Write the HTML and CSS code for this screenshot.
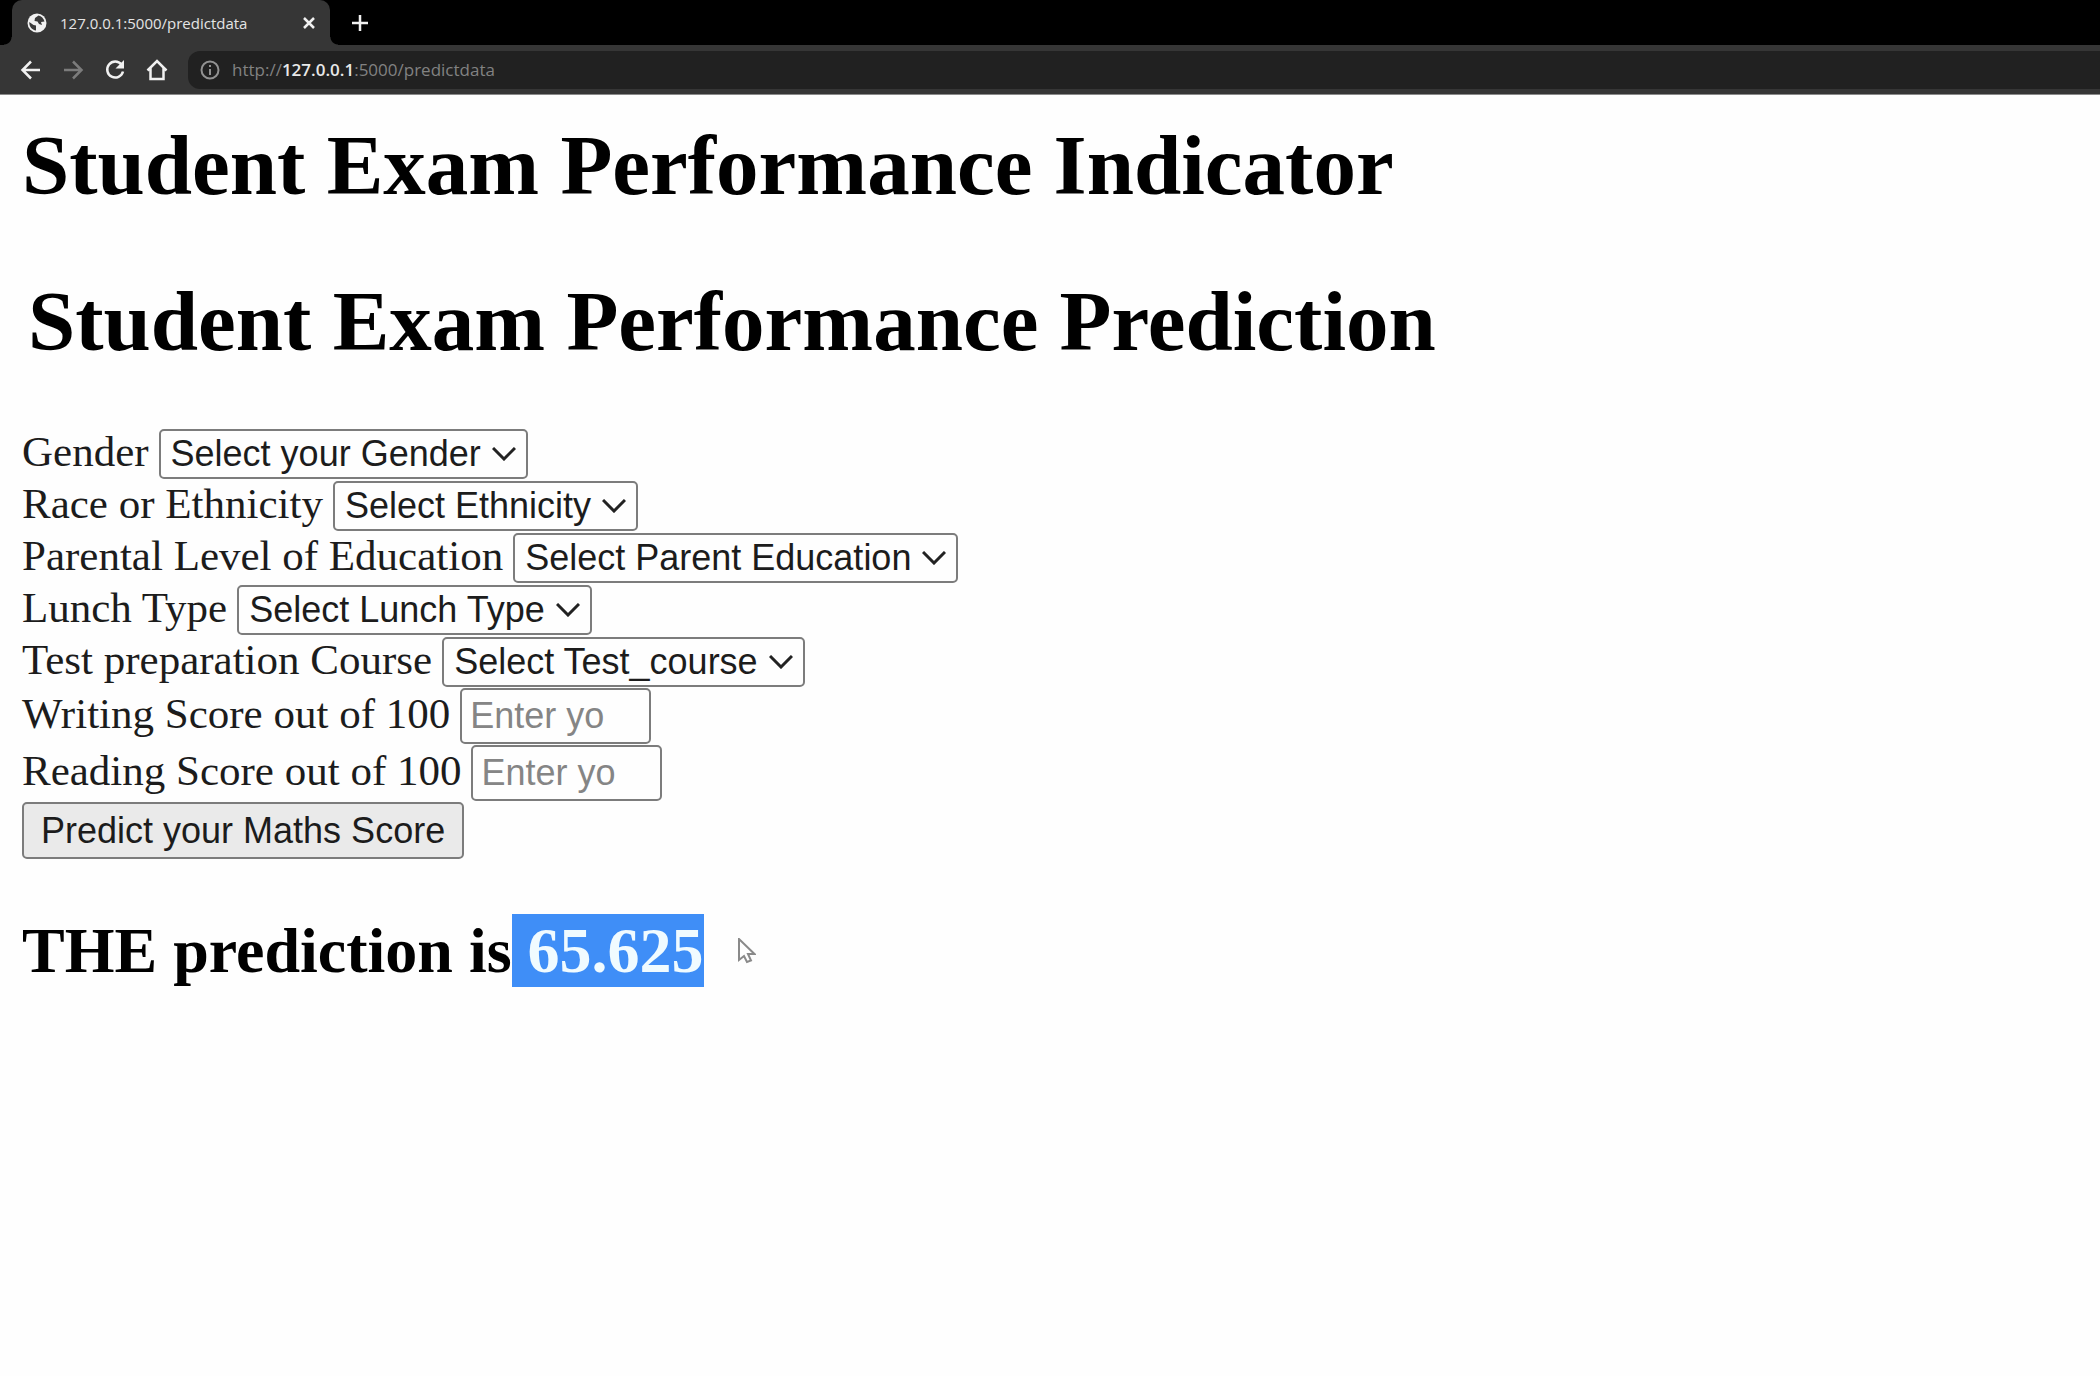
FILE: index.html
```html
<!DOCTYPE html>
<html lang="en">
<head>
<meta charset="utf-8">
<title>127.0.0.1:5000/predictdata</title>
<link rel="stylesheet" href="styles.css">
</head>
<body>
<header class="browser">
  <div class="tabstrip">
    <div class="tab">
      <svg class="globe" viewBox="0 0 20 20" aria-hidden="true"><circle cx="10" cy="10" r="9.5" fill="#f1f1f1"/><path d="M2.300 9 6.500 12l2.500.5v5C5 17 2 13.500 2.300 9zM8 5l3.500-2.500c3 .5 5 2.500 6 6L14 9l1 3-3-1-1.500-2.500L7.500 8z" fill="#3a3a3a"/></svg>
      <span class="tab-title">127.0.0.1:5000/predictdata</span>
      <button class="plain" type="button" aria-label="Close tab"><svg class="close" viewBox="0 0 12 12"><path d="M1 1l10 10M11 1L1 11"/></svg></button>
    </div>
    <button class="plain" type="button" aria-label="New tab"><svg class="plus" viewBox="0 0 16 16"><path d="M8 0v16M0 8h16"/></svg></button>
  </div>
  <nav class="toolbar">
    <button class="plain" type="button" aria-label="Back"><svg class="nav" viewBox="0 0 22 22"><path d="M20 11H3M11 2.500 2.500 11l8.500 8.500"/></svg></button>
    <button class="plain dim" type="button" aria-label="Forward"><svg class="nav" viewBox="0 0 22 22"><path d="M2 11h17M11 2.500l8.500 8.500-8.500 8.500"/></svg></button>
    <button class="plain" type="button" aria-label="Reload"><svg class="nav" viewBox="0 0 22 22"><path d="M17.500 5.500A8 8 0 1 0 19 12.500"/><path class="solid" d="M20 1v8.500h-8.500z"/></svg></button>
    <button class="plain" type="button" aria-label="Home"><svg class="nav" viewBox="0 0 22 22"><path d="M1.500 11.500 11 2l9.500 9.500M4.500 9v11h13V9"/></svg></button>
    <div class="address">
      <svg class="info" viewBox="0 0 20 20" aria-hidden="true"><circle cx="10" cy="10" r="8.500"/><path d="M10 9v6M10 5v2"/></svg>
      <span>http://<b>127.0.0.1</b>:5000/predictdata</span>
    </div>
  </nav>
</header>
<main class="page">
  <h1>Student Exam Performance Indicator</h1>
  <h1 class="inset">Student Exam Performance Prediction</h1>
  <form class="form">
    <div class="field">
      <label for="gender">Gender</label>
      <span class="select"><select id="gender"><option>Select your Gender</option></select><svg viewBox="0 0 24 14" aria-hidden="true"><path d="M1 1l11 11L23 1"/></svg></span>
    </div>
    <div class="field">
      <label for="ethnicity">Race or Ethnicity</label>
      <span class="select"><select id="ethnicity"><option>Select Ethnicity</option></select><svg viewBox="0 0 24 14" aria-hidden="true"><path d="M1 1l11 11L23 1"/></svg></span>
    </div>
    <div class="field">
      <label for="education">Parental Level of Education</label>
      <span class="select"><select id="education"><option>Select Parent Education</option></select><svg viewBox="0 0 24 14" aria-hidden="true"><path d="M1 1l11 11L23 1"/></svg></span>
    </div>
    <div class="field">
      <label for="lunch">Lunch Type</label>
      <span class="select"><select id="lunch"><option>Select Lunch Type</option></select><svg viewBox="0 0 24 14" aria-hidden="true"><path d="M1 1l11 11L23 1"/></svg></span>
    </div>
    <div class="field">
      <label for="course">Test preparation Course</label>
      <span class="select"><select id="course"><option>Select Test_course</option></select><svg viewBox="0 0 24 14" aria-hidden="true"><path d="M1 1l11 11L23 1"/></svg></span>
    </div>
    <div class="field score">
      <label for="writing">Writing Score out of 100</label>
      <input id="writing" type="text" inputmode="numeric" placeholder="Enter yo">
    </div>
    <div class="field score">
      <label for="reading">Reading Score out of 100</label>
      <input id="reading" type="text" inputmode="numeric" placeholder="Enter yo">
    </div>
    <button class="submit" type="button">Predict your Maths Score</button>
  </form>
  <h2>THE prediction is<mark> 65.625</mark><svg class="pointer" viewBox="0 0 18 26" aria-hidden="true"><path d="M1 1v21l5-4 3 6 4-1.500-3-6.500h6.500z"/></svg></h2>
</main>
</body>
</html>
```
FILE: styles.css
```css
* { box-sizing: border-box; }
body {
  margin: 0;
  background: #fefefe;
  color: #000;
  font-family: "Liberation Serif", "Times New Roman", serif;
}

/* browser frame */
.browser {
  font-family: "Open Sans", "Noto Sans", sans-serif;
  background: #363636;
  border-bottom: 1px solid #8a8a8a;
}
.tabstrip {
  display: flex;
  align-items: center;
  gap: 22px;
  height: 45px;
  padding-left: 12px;
  background: #000;
}
.tab {
  position: relative;
  display: flex;
  align-items: center;
  gap: 13px;
  width: 318px;
  height: 45px;
  padding: 0 15px;
  border-radius: 10px 10px 0 0;
  background: #363636;
  color: #e4e4e4;
  font-size: 15px;
}
/* curved feet that join the tab to the toolbar */
.tab::before, .tab::after {
  content: "";
  position: absolute;
  bottom: 0;
  width: 8px;
  height: 8px;
}
.tab::before { right: 100%; background: radial-gradient(circle at 0 0, #000 7px, #363636 8px); }
.tab::after { left: 100%; background: radial-gradient(circle at 100% 0, #000 7px, #363636 8px); }
.tab-title { flex: 1; white-space: nowrap; }
.plain {
  display: flex;
  padding: 0;
  border: 0;
  background: none;
  color: #f1f1f1;
}
.plain svg, .info {
  fill: none;
  stroke: currentColor;
  stroke-width: 2.5;
}
.globe { width: 20px; height: 20px; }
.close { width: 12px; height: 12px; }
.plus { width: 16px; height: 16px; }
.nav { width: 22px; height: 22px; }
.plain .solid { fill: currentColor; stroke: none; }
.dim { color: #7c7c7c; }
.toolbar {
  display: flex;
  align-items: center;
  gap: 20px;
  height: 49px;
  padding-left: 20px;
}
.address {
  display: flex;
  flex: 1;
  align-items: center;
  gap: 12px;
  height: 38px;
  padding-left: 12px;
  border-radius: 12px 0 0 12px;
  background: #212121;
  color: #828282;
  font-size: 17px;
}
.address b { color: #e8e8e8; font-weight: 600; }
.address .info { width: 20px; height: 20px; color: #929292; stroke-width: 2; }

/* page */
.page { padding: 21px 22px; }
h1 {
  margin: 0 0 57px;
  font-size: 85px;
  line-height: 99px;
}
.inset { padding-left: 6px; }
.form { font-size: 43px; color: #1c1c1c; }
.field {
  display: flex;
  align-items: baseline;
  gap: 10px;
  height: 52px;
  line-height: 48px;
}
.score { height: 57px; }
.select { display: grid; align-items: center; }
.select select, .select svg { grid-area: 1 / 1; }
.select svg {
  justify-self: end;
  width: 24px;
  height: 14px;
  margin-right: 12px;
  fill: none;
  stroke: #222;
  stroke-width: 3;
  pointer-events: none;
}
select, input, .submit {
  margin: 0;
  border: 2px solid #7c7c7c;
  border-radius: 5px;
  background: #fefefe;
  color: #1c1c1c;
  font-family: "Liberation Sans", Arial, sans-serif;
  font-size: 36px;
}
select {
  appearance: none;
  height: 50px;
  padding: 0 44px 0 10px;
}
input {
  width: 191px;
  height: 56px;
  padding: 0 8px;
}
input::placeholder { color: #858585; }
.submit {
  display: block;
  height: 57px;
  padding: 0 17px;
  background: #eaeaea;
}
h2 {
  display: flex;
  align-items: center;
  margin: 55px 0 0;
  font-size: 64px;
  line-height: 73px;
}
mark { background: #3f8ef7; color: #f0fbff; white-space: pre; }
.pointer {
  width: 18px;
  height: 26px;
  margin-left: 34px;
  fill: #fefefe;
  stroke: #8a8a8a;
  stroke-width: 2;
}
```
